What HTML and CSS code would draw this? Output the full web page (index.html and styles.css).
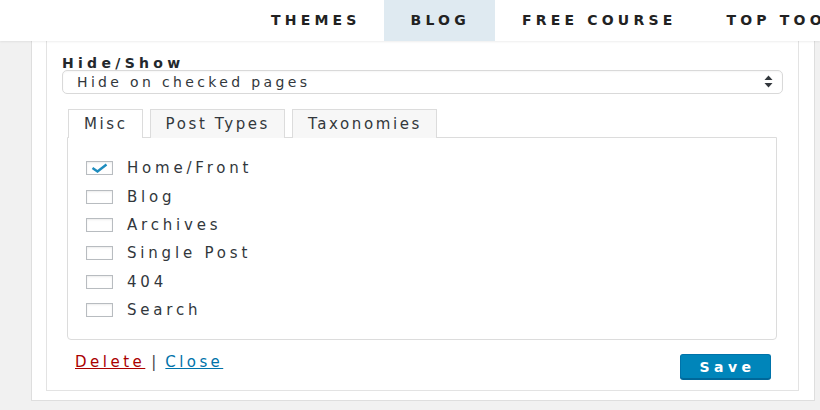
FILE: index.html
```html
<!DOCTYPE html>
<html lang="en">
<head>
<meta charset="utf-8">
<title>Widget visibility</title>
<link rel="stylesheet" href="styles.css">
</head>
<body>
<nav class="topnav">
  <a class="nav-item">THEMES</a>
  <a class="nav-item nav-item--active">BLOG</a>
  <a class="nav-item">FREE COURSE</a>
  <a class="nav-item">TOP TOO</a>
</nav>
<main class="page">
  <div class="wrap">
    <div class="widget">
      <label class="field-label">Hide/Show</label>
      <div class="select">
        <span class="select-text">Hide on checked pages</span>
        <svg class="select-arrows" width="9" height="14" viewBox="0 0 9 14"><path d="M4.5 0.5 L8.5 5 L0.5 5 Z" fill="#32373c"/><path d="M0.5 8 L8.5 8 L4.5 12.5 Z" fill="#32373c"/></svg>
      </div>
      <div class="tabs-area">
        <div class="tabs">
          <span class="tab tab--active">Misc</span>
          <span class="tab">Post Types</span>
          <span class="tab">Taxonomies</span>
        </div>
        <div class="tab-panel">
          <div class="check-row"><span class="checkbox"><svg width="19" height="10" viewBox="0 0 19 10"><path d="M2.5 5 L7.5 8.5 L16.5 1.5" fill="none" stroke="#1e8cbe" stroke-width="2.4"/></svg></span><span class="check-label">Home/Front</span></div>
          <div class="check-row"><span class="checkbox"></span><span class="check-label">Blog</span></div>
          <div class="check-row"><span class="checkbox"></span><span class="check-label">Archives</span></div>
          <div class="check-row"><span class="checkbox"></span><span class="check-label">Single Post</span></div>
          <div class="check-row"><span class="checkbox"></span><span class="check-label">404</span></div>
          <div class="check-row"><span class="checkbox"></span><span class="check-label">Search</span></div>
        </div>
      </div>
      <div class="actions">
        <div class="links"><a class="link link--delete">Delete</a><span class="sep">|</span><a class="link link--close">Close</a></div>
        <button class="save">Save</button>
      </div>
    </div>
  </div>
</main>
</body>
</html>
```
FILE: styles.css
```css
* { box-sizing: border-box; }
html, body { margin: 0; padding: 0; }
body {
  width: 820px;
  height: 410px;
  overflow: hidden;
  font-family: "DejaVu Sans", "Open Sans", sans-serif;
  color: #23282d;
  background: #ececec;
}
.topnav {
  position: relative;
  z-index: 2;
  height: 41px;
  background: #fff;
  display: flex;
  padding-left: 244px;
  white-space: nowrap;
  overflow: hidden;
  box-shadow: 0 1px 2px rgba(0,0,0,0.07);
}
.nav-item {
  display: block;
  flex: none;
  padding: 0 23px 0 27px;
  line-height: 41px;
  font-size: 14px;
  font-weight: bold;
  letter-spacing: 4.2px;
  color: #222;
}
.nav-item--active { background: #dfeaf1; padding-right: 25px; }
.page {
  background: #f1f1f1;
  height: 369px;
  padding: 0 5px 0 31px;
}
.wrap {
  background: #fff;
  border: 1px solid #dedede;
  border-top: 0;
  padding: 0 15px 9px 14px;
}
.widget {
  border: 1px solid #e3e3e3;
  border-top: 0;
  padding: 15px 15px 11px 15px;
}
.field-label {
  display: block;
  font-size: 14px;
  line-height: 14px;
  font-weight: bold;
  letter-spacing: 4.3px;
  color: #23282d;
}
.select {
  height: 24px;
  border: 1px solid #d9d9d9;
  border-radius: 5px;
  display: flex;
  align-items: center;
  justify-content: space-between;
  padding: 0 9px 0 14px;
  box-shadow: inset 0 1px 2px rgba(0,0,0,0.04);
}
.select-text {
  font-size: 14px;
  letter-spacing: 3.35px;
  color: #32373c;
}
.select-arrows { display: block; }
.tabs-area {
  margin: 15px 6px 0 5px;
}
.tabs {
  display: flex;
  gap: 7px;
  padding-left: 1px;
}
.tab {
  height: 29px;
  line-height: 28px;
  padding: 0 14px 0 15px;
  border: 1px solid #dcdcdc;
  border-bottom: 0;
  background: #f7f7f7;
  font-size: 15px;
  letter-spacing: 2.6px;
  color: #32373c;
  margin-bottom: -1px;
  position: relative;
}
.tab--active { background: #fff; z-index: 1; }
.tab-panel {
  border: 1px solid #dcdcdc;
  border-radius: 0 0 4px 4px;
  padding: 16px 18px 15px;
}
.check-row {
  height: 28.4px;
  display: flex;
  align-items: center;
}
.checkbox {
  width: 27px;
  height: 14px;
  border: 1px solid #b8bcc0;
  background: #fff;
  box-shadow: inset 0 1px 2px rgba(0,0,0,0.08);
  display: flex;
  align-items: center;
  justify-content: center;
  flex: none;
}
.checkbox svg { display: block; }
.check-label {
  margin-left: 14px;
  font-size: 15px;
  letter-spacing: 3.8px;
  color: #32373c;
}
.actions {
  display: flex;
  justify-content: space-between;
  align-items: flex-start;
  margin: 14px 12px 0 13px;
}
.links {
  margin-top: 0;
  font-size: 15px;
  line-height: 17px;
  display: flex;
}
.link { text-decoration: underline; }
.link--delete { color: #a00; letter-spacing: 3.5px; }
.link--close { color: #0073aa; letter-spacing: 3.4px; }
.sep { color: #444; margin: 0 9px 0 6px; }
.save {
  width: 91px;
  height: 25px;
  border: 1px solid #0073aa;
  border-bottom-color: #006799;
  border-radius: 3px;
  background: #0085ba;
  color: #fff;
  font-family: "DejaVu Sans", sans-serif;
  font-weight: bold;
  font-size: 14px;
  letter-spacing: 4.5px;
  padding: 0 0 0 4px;
  box-shadow: 0 1px 0 #006799;
}
```
